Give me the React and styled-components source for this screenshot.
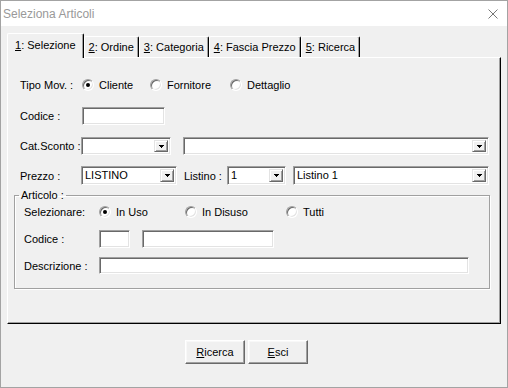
import React from 'react'
import styled, { createGlobalStyle } from 'styled-components'

const GlobalStyle = createGlobalStyle`
  html, body {
    margin: 0;
    padding: 0;
    background: #f0f0f0;
  }
  body {
    font-family: "Liberation Sans", Arial, sans-serif;
    font-size: 11px;
    color: #000;
  }
`

const Window = styled.div`
  width: 508px;
  height: 388px;
  box-sizing: border-box;
  border: 1px solid #a3a3a3;
  background: #f0f0f0;
  display: flex;
  flex-direction: column;
`
const TitleBar = styled.div`
  height: 25px;
  flex: none;
  background: #fff;
  display: flex;
  align-items: center;
  justify-content: space-between;
  padding: 0 9px 0 2px;
  font-size: 12px;
  color: #999;
`
const Body = styled.div`
  flex: 1;
  padding: 7px 6px 0 6px;
`
const TabStrip = styled.div`
  display: flex;
  align-items: flex-end;
  height: 24px;
`
const Tab = styled.div`
  position: relative;
  z-index: ${p => (p.$active ? 1 : 0)};
  box-sizing: border-box;
  height: ${p => (p.$active ? 25 : 21)}px;
  margin-bottom: ${p => (p.$active ? -1 : 0)}px;
  padding: 0 ${p => (p.$active ? 7 : 4)}px ${p => (p.$active ? 2 : 0)}px;
  display: flex;
  align-items: center;
  background: #f0f0f0;
  border-top: 1px solid #fff;
  border-left: 1px solid #fff;
  border-right: 1px solid #000;
  box-shadow: inset -1px 0 0 #a0a0a0;
  border-radius: 2px 2px 0 0;
  white-space: nowrap;
`
const Panel = styled.div`
  width: 494px;
  height: 267px;
  box-sizing: border-box;
  border-top: 1px solid #fff;
  border-left: 1px solid #fff;
  border-right: 1px solid #000;
  border-bottom: 1px solid #000;
  box-shadow: inset -1px -1px 0 #a0a0a0;
  padding: 0 6px;
`
const Row = styled.div`
  display: flex;
  align-items: center;
  height: ${p => p.$h}px;
  margin-top: ${p => p.$top}px;
  padding-left: ${p => p.$indent ?? 6}px;
`
const Label = styled.span`
  width: ${p => p.$w}px;
  margin-left: ${p => p.$ml || 0}px;
  flex: none;
  white-space: nowrap;
`
const sunken = `
  box-sizing: border-box;
  background: #fff;
  border: 1px solid;
  border-color: #a0a0a0 #fff #fff #a0a0a0;
  box-shadow: inset 1px 1px 0 #696969, inset -1px -1px 0 #e3e3e3;
`
const TextBox = styled.div`
  ${sunken}
  width: ${p => p.$w}px;
  height: ${p => p.$h || 18}px;
  margin-left: ${p => p.$ml || 0}px;
  flex: none;
`
const ComboBox = styled.div`
  ${sunken}
  width: ${p => p.$w}px;
  height: ${p => p.$h || 18}px;
  margin-left: ${p => p.$ml || 0}px;
  flex: none;
  display: flex;
  align-items: stretch;
  padding: 2px;
`
const ComboText = styled.span`
  flex: 1;
  padding-left: 1px;
  line-height: 13px;
  white-space: nowrap;
`
const DropButton = styled.span`
  width: 14px;
  box-sizing: border-box;
  background: #f0f0f0;
  border: 1px solid;
  border-color: #e3e3e3 #696969 #696969 #e3e3e3;
  box-shadow: inset 1px 1px 0 #fff, inset -1px -1px 0 #a0a0a0;
  display: flex;
  align-items: center;
  justify-content: center;
`
const RadioOption = styled.label`
  display: flex;
  align-items: center;
  gap: 5px;
  width: ${p => (p.$w ? `${p.$w}px` : 'auto')};
  flex: none;
`
const RadioCircle = styled.span`
  position: relative;
  width: 12px;
  height: 12px;
  box-sizing: border-box;
  border-radius: 50%;
  background: #fff;
  border: 1px solid;
  border-color: #a0a0a0 #fff #fff #a0a0a0;
  box-shadow: inset 1px 1px 0 #696969, inset -1px -1px 0 #e3e3e3;
  &::after {
    content: '';
    display: ${p => (p.$checked ? 'block' : 'none')};
    position: absolute;
    left: 3px;
    top: 3px;
    width: 4px;
    height: 4px;
    border-radius: 50%;
    background: #000;
  }
`
const Group = styled.fieldset`
  box-sizing: border-box;
  width: 476px;
  height: 100px;
  margin: 4px 0 0 0;
  padding: 0;
  border: 1px solid #a0a0a0;
  box-shadow: 1px 1px 0 #fff, inset 1px 1px 0 #fff;
`
const Legend = styled.legend`
  margin-left: 4px;
  padding: 0 2px;
  line-height: 13px;
`
const ButtonRow = styled.div`
  display: flex;
  gap: 3px;
  margin-top: 16px;
  padding-left: 178px;
`
const Button = styled.button`
  width: 60px;
  height: 24px;
  padding: 0;
  font: inherit;
  color: #000;
  background: #f0f0f0;
  border: 1px solid;
  border-color: #fff #696969 #696969 #fff;
  box-shadow: inset -1px -1px 0 #a0a0a0, inset 1px 1px 0 #f8f8f8;
`

const Arrow = () => (
  <svg width="5" height="3" viewBox="0 0 5 3" shapeRendering="crispEdges">
    <rect x="0" y="0" width="5" height="1" fill="#000" />
    <rect x="1" y="1" width="3" height="1" fill="#000" />
    <rect x="2" y="2" width="1" height="1" fill="#000" />
  </svg>
)

const Combo = ({ w, h, ml, value }) => (
  <ComboBox $w={w} $h={h} $ml={ml}>
    <ComboText>{value}</ComboText>
    <DropButton><Arrow /></DropButton>
  </ComboBox>
)

const Radio = ({ w, checked, children }) => (
  <RadioOption $w={w}>
    <RadioCircle $checked={checked} />
    {children}
  </RadioOption>
)

const tabs = [
  ['1', ': Selezione'],
  ['2', ': Ordine'],
  ['3', ': Categoria'],
  ['4', ': Fascia Prezzo'],
  ['5', ': Ricerca'],
]

export default function App() {
  return (
    <>
      <GlobalStyle />
      <Window>
        <TitleBar>
          <span>Seleziona Articoli</span>
          <svg width="10" height="10" viewBox="0 0 10 10">
            <path d="M0.5 0.5L9.5 9.5M9.5 0.5L0.5 9.5" stroke="#777" strokeWidth="1" />
          </svg>
        </TitleBar>
        <Body>
          <TabStrip>
            {tabs.map(([k, t], i) => (
              <Tab key={k} $active={i === 0}>
                <u>{k}</u>{t}
              </Tab>
            ))}
          </TabStrip>
          <Panel>
            <Row $h={16} $top={19}>
              <Label $w={62}>Tipo Mov. :</Label>
              <Radio w={68} checked>Cliente</Radio>
              <Radio w={80}>Fornitore</Radio>
              <Radio>Dettaglio</Radio>
            </Row>
            <Row $h={18} $top={14}>
              <Label $w={62}>Codice :</Label>
              <TextBox $w={83} />
            </Row>
            <Row $h={18} $top={12}>
              <Label $w={61}>Cat.Sconto :</Label>
              <Combo w={90} />
              <Combo w={306} ml={12} />
            </Row>
            <Row $h={19} $top={11}>
              <Label $w={61}>Prezzo :</Label>
              <Combo w={96} h={19} value="LISTINO" />
              <Label $w={43} $ml={7}>Listino :</Label>
              <Combo w={59} h={19} value="1" />
              <Combo w={196} h={19} ml={7} value="Listino 1" />
            </Row>
            <Group>
              <Legend>Articolo :</Legend>
              <Row $h={16} $top={2} $indent={9}>
                <Label $w={75}>Selezionare:</Label>
                <Radio w={86} checked>In Uso</Radio>
                <Radio w={101}>In Disuso</Radio>
                <Radio>Tutti</Radio>
              </Row>
              <Row $h={18} $top={10} $indent={9}>
                <Label $w={75}>Codice :</Label>
                <TextBox $w={31} />
                <TextBox $w={132} $ml={12} />
              </Row>
              <Row $h={17} $top={9} $indent={9}>
                <Label $w={75}>Descrizione :</Label>
                <TextBox $w={370} $h={17} />
              </Row>
            </Group>
          </Panel>
          <ButtonRow>
            <Button><u>R</u>icerca</Button>
            <Button><u>E</u>sci</Button>
          </ButtonRow>
        </Body>
      </Window>
    </>
  )
}
